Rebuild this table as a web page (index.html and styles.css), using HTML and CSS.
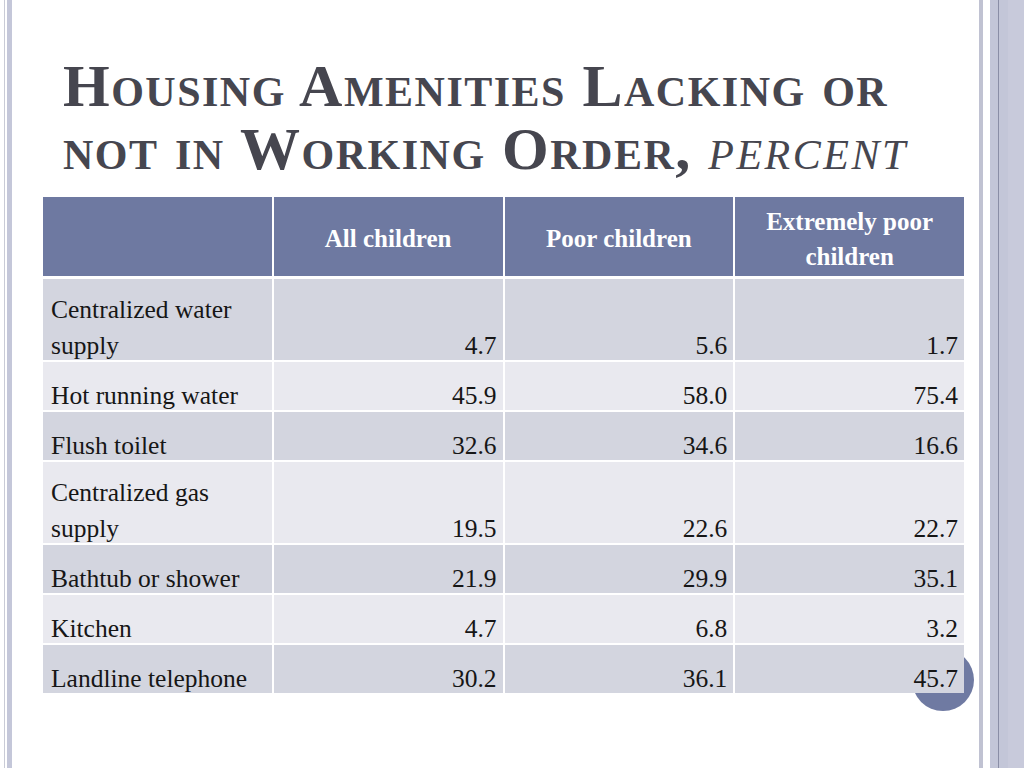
FILE: index.html
```html
<!DOCTYPE html>
<html>
<head>
<meta charset="utf-8">
<link rel="stylesheet" href="styles.css">
</head>
<body>
<div class="slide">
  <h1 class="title">Housing Amenities Lacking or<br>not in Working Order, <em>percent</em></h1>
  <div class="dot"></div>
  <table class="data">
    <colgroup><col class="c"><col class="c"><col class="c"><col class="c"></colgroup>
    <thead>
      <tr>
        <th></th>
        <th>All children</th>
        <th>Poor children</th>
        <th>Extremely poor children</th>
      </tr>
    </thead>
    <tbody>
      <tr class="dark tall"><td><div class="t">Centralized water supply</div></td><td class="n"><div class="t">4.7</div></td><td class="n"><div class="t">5.6</div></td><td class="n"><div class="t">1.7</div></td></tr>
      <tr class="light"><td><div class="t">Hot running water</div></td><td class="n"><div class="t">45.9</div></td><td class="n"><div class="t">58.0</div></td><td class="n"><div class="t">75.4</div></td></tr>
      <tr class="dark"><td><div class="t">Flush toilet</div></td><td class="n"><div class="t">32.6</div></td><td class="n"><div class="t">34.6</div></td><td class="n"><div class="t">16.6</div></td></tr>
      <tr class="light tall"><td><div class="t">Centralized gas supply</div></td><td class="n"><div class="t">19.5</div></td><td class="n"><div class="t">22.6</div></td><td class="n"><div class="t">22.7</div></td></tr>
      <tr class="dark"><td><div class="t">Bathtub or shower</div></td><td class="n"><div class="t">21.9</div></td><td class="n"><div class="t">29.9</div></td><td class="n"><div class="t">35.1</div></td></tr>
      <tr class="light"><td><div class="t">Kitchen</div></td><td class="n"><div class="t">4.7</div></td><td class="n"><div class="t">6.8</div></td><td class="n"><div class="t">3.2</div></td></tr>
      <tr class="dark"><td><div class="t">Landline telephone</div></td><td class="n"><div class="t">30.2</div></td><td class="n"><div class="t">36.1</div></td><td class="n"><div class="t">45.7</div></td></tr>
    </tbody>
  </table>
</div>
</body>
</html>
```
FILE: styles.css
```css
html, body {
  margin: 0;
  padding: 0;
}
body {
  width: 1024px;
  height: 768px;
  overflow: hidden;
  background:
    linear-gradient(to right,
      #ffffff 0, #ffffff 4px,
      #c9cbd6 4px, #c9cbd6 5px,
      #ffffff 5px, #ffffff 7px,
      #c4c7d9 7px, #c4c7d9 12px,
      #ffffff 12px, #ffffff 979px,
      #c0c2d2 979px, #c0c2d2 983px,
      #ffffff 983px, #ffffff 990px,
      #c3c6d8 990px, #c3c6d8 998px,
      #8a8ea6 998px, #8a8ea6 999px,
      #c3c6d8 999px, #c3c6d8 1008px,
      #c8cadb 1008px, #c8cadb 1024px);
  font-family: "Liberation Serif", "Times New Roman", serif;
}
.slide {
  position: relative;
  width: 1024px;
  height: 768px;
  padding-top: 55px;
  box-sizing: border-box;
}
.title {
  margin: 0 0 14px 63px;
  font-size: 60px;
  line-height: 63px;
  letter-spacing: 1.5px;
  font-weight: bold;
  font-variant: small-caps;
  color: #46464f;
  white-space: nowrap;
}
.title em {
  font-weight: normal;
  font-style: italic;
  letter-spacing: 2.5px;
}
.dot {
  position: absolute;
  left: 912px;
  top: 649px;
  width: 62px;
  height: 62px;
  border-radius: 50%;
  background: #6f7aa2;
}
.data {
  position: relative;
  margin-left: 41px;
  width: 925px;
  border-spacing: 2px;
  table-layout: fixed;
  font-size: 25.5px;
  color: #161616;
}
.data th {
  height: 75px;
  padding: 4px 8px 0;
  background: #6e79a1;
  color: #ffffff;
  font-size: 25px;
  line-height: 35px;
  font-weight: bold;
  text-align: center;
  vertical-align: middle;
}
.data thead tr th {
  border-bottom: 1px solid #ffffff;
}
.data td {
  height: 48px;
  padding: 0 6px 0 8px;
  vertical-align: bottom;
  line-height: 36px;
  text-align: left;
}
.data tr.tall td {
  height: 81px;
}
.data td.n {
  text-align: right;
}
.data .t {
  margin-bottom: -4px;
}
.data tr.dark td {
  background: #d3d5df;
}
.data tr.light td {
  background: #e9e9ef;
}
```
